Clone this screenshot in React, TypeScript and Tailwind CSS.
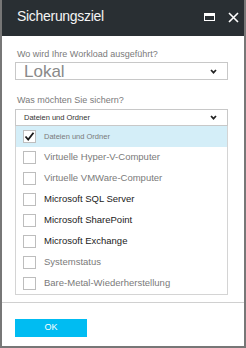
import React from 'react';

const font = { fontFamily: '"Liberation Sans", Arial, sans-serif' };

function Chevron() {
  return (
    <svg width="7" height="5" viewBox="0 0 7 5" className="shrink-0">
      <path d="M1 1 L3.5 3.7 L6 1" fill="none" stroke="#222" strokeWidth="1.7" />
    </svg>
  );
}

function Checkbox({ checked }: { checked?: boolean }) {
  return (
    <div className="w-[13px] h-[13px] border border-[#bdbdbd] bg-white shrink-0 flex items-center justify-center">
      {checked && (
        <svg width="11" height="11" viewBox="0 0 11 11">
          <path d="M1.5 5.5 L4.2 8.5 L9.5 1.8" fill="none" stroke="#1a1a1a" strokeWidth="1.8" />
        </svg>
      )}
    </div>
  );
}

export default function App() {
  const items = [
    { label: 'Dateien und Ordner', checked: true, active: true, small: true, dark: false },
    { label: 'Virtuelle Hyper-V-Computer', dark: false },
    { label: 'Virtuelle VMWare-Computer', dark: false },
    { label: 'Microsoft SQL Server', dark: true },
    { label: 'Microsoft SharePoint', dark: true },
    { label: 'Microsoft Exchange', dark: true },
    { label: 'Systemstatus', dark: false },
    { label: 'Bare-Metal-Wiederherstellung', dark: false },
  ];

  return (
    <div className="w-[246px] h-[348px] bg-white border-x-2 border-b-2 border-[#777] flex flex-col" style={font}>
      {/* Header */}
      <div className="h-[36px] bg-[#292f33] flex items-center pl-[15px] pr-[5px] pb-[4px] shrink-0">
        <span className="text-[#f4f4f4] text-[14px] tracking-[-0.3px] flex-1">Sicherungsziel</span>
        <div className="flex items-center gap-[13px] pt-[2px]">
          <div className="w-[11px] h-[8px] border border-white border-t-[3px]" />
          <svg width="11" height="11" viewBox="0 0 11 11">
            <path d="M1 1 L10 10 M10 1 L1 10" stroke="white" strokeWidth="1.6" />
          </svg>
        </div>
      </div>

      {/* Body */}
      <div className="pl-[13px] pr-[16px] flex flex-col">
        <div className="mt-[11px] h-[14px] leading-[14px] text-[9px] text-[#7a7a7a] pl-[2px]">
          Wo wird Ihre Workload ausgeführt?
        </div>
        <div className="mt-[1px] h-[18px] border border-[#c8c8c8] flex items-start justify-between pr-[10px]">
          <span className="text-[17px] leading-[14px] text-[#8a8a8a] pl-[8px] pt-[2px]">Lokal</span>
          <div className="self-center"><Chevron /></div>
        </div>

        <div className="mt-[13px] h-[14px] leading-[14px] text-[9px] text-[#7a7a7a] pl-[2px]">
          Was möchten Sie sichern?
        </div>
        <div className="mt-[2px] h-[17px] border border-[#c8c8c8] flex items-center justify-between pl-[8px] pr-[10px]">
          <span className="text-[7.5px] text-[#333]">Dateien und Ordner</span>
          <Chevron />
        </div>

        {/* Dropdown list */}
        <div className="border-x border-b border-[#d4d4d4] flex flex-col">
          {items.map((it, idx) => (
            <div
              key={idx}
              className={`h-[21px] flex items-center pl-[7px] gap-[8px] ${it.active ? 'bg-[#d4eef8]' : ''}`}
            >
              <Checkbox checked={it.checked} />
              <span
                className={`${it.small ? 'text-[7.5px]' : 'text-[9.5px]'} ${it.dark ? 'text-[#222]' : 'text-[#7a7a7a]'}`}
              >
                {it.label}
              </span>
            </div>
          ))}
        </div>
      </div>

      <div className="mt-[7px] h-px bg-[#d0d0d0]" />

      <div className="pl-[13px] mt-[16px]">
        <button className="w-[72px] h-[18px] bg-[#00bcf2] text-white text-[9px] flex items-center justify-center">
          OK
        </button>
      </div>
    </div>
  );
}
